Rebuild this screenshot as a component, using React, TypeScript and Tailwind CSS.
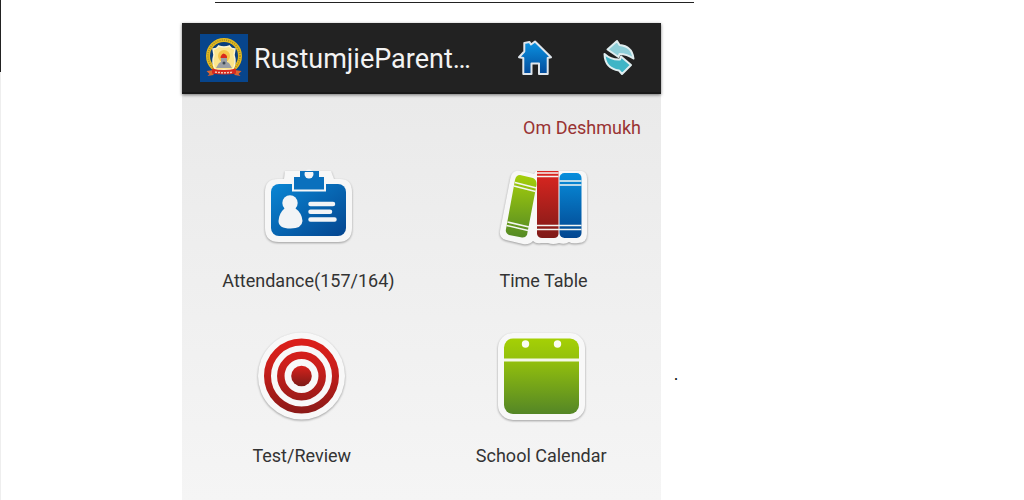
import React from 'react'

const SchoolLogo = () => (
  <svg viewBox="0 0 48 48" className="h-12 w-12 shrink-0" aria-hidden="true">
    <rect width="48" height="48" fill="#07458c" />
    {/* ring */}
    <circle cx="24" cy="22" r="16" fill="#0b3f7c" stroke="#e3b91f" strokeWidth="4" />
    <circle cx="24" cy="22" r="16" fill="none" stroke="#a08a28" strokeWidth="1.5" strokeDasharray="1 1.2" />
    {/* shield */}
    <path d="M13 15q4 0 5.500-3q5.500 2 11 0q1.500 3 5.500 3l-1 6q3 9-2 15H16q-5-6-2-15z" fill="#fbe58d" stroke="#fdf4cf" strokeWidth="1.500" />
    <circle cx="24" cy="22" r="6" fill="#f5c549" />
    <path d="M16 34l3-5l2-1v-4h6v4l2 1l3 5z" fill="#9a9ea4" />
    <path d="M20.500 24q0-3 3-4.500q4 1 3.500 4.500z" fill="#d92a1c" />
    <circle cx="24" cy="29" r="1.500" fill="#3e4a56" />
    {/* ribbon */}
    <path d="M6.500 37l7-1v5l-6 1l2-2z M41.500 37l-7-1v5l6 1l-2-2z" fill="#dc6430" />
    <path d="M12 34.500q12 3 24 0v5q-12 2-24 0z" fill="#d8281f" />
    <path d="M15 38q9 1.500 18 0" fill="none" stroke="#f3c9b5" strokeWidth="1.500" strokeDasharray="2 1" />
  </svg>
)

const HomeIcon = () => (
  <svg viewBox="0 0 40 40" className="h-10 w-10" aria-hidden="true">
    <defs>
      <linearGradient id="home" x1="0" y1="0" x2="0" y2="1">
        <stop offset="0" stopColor="#0b93e2" />
        <stop offset="1" stopColor="#034b9b" />
      </linearGradient>
    </defs>
    <path
      d="M4 19.200L9.300 13.500V5L14.500 4L16 6.500L20 3.500L36 19.200L32.700 20V36H24V25.500H16.500V36H8.300V20z"
      fill="url(#home)"
      stroke="#dfe6ec"
      strokeWidth="2"
      strokeLinejoin="round"
    />
  </svg>
)

const RefreshIcon = () => (
  <svg viewBox="0 0 40 40" className="h-10 w-10" aria-hidden="true">
    <g stroke="#e0eef0" strokeWidth="2" strokeLinejoin="round">
      <path d="M17 3L19.500 7Q32 8 33.500 20.500Q27 16 19.500 16L18.500 19L7.500 11.500z" fill="#8fcfd9" />
      <path d="M4.500 16Q11 22 20 21.500L21 18.500L31 27L22 36L19 32.500Q5 30.500 4.500 16z" fill="#3fb5c6" />
    </g>
  </svg>
)

const AttendanceIcon = () => (
  <svg viewBox="1 0 96 80" className="h-20 w-24" aria-hidden="true">
    <defs>
      <linearGradient id="badge" x1="0" y1="0" x2="1" y2="1">
        <stop offset="0" stopColor="#0a86d4" />
        <stop offset="1" stopColor="#04458f" />
      </linearGradient>
    </defs>
    <path
      d="M25 3H71L74 11H80Q92 11 92 24V60Q92 74 78 74H19Q5 74 5 60V24Q5 11 18 11H24z"
      fill="#f7f7f7"
      className="drop-shadow-[0_1px_1px_rgba(0,0,0,0.35)]"
    />
    <rect x="11" y="16" width="75" height="52" rx="8" fill="url(#badge)" />
    <path d="M34 9H40V3H59V9H65V22H34z" fill="#0a70bd" />
    <path d="M33 9V22.500H65V9" fill="none" stroke="#f7f7f7" strokeWidth="2" />
    <circle cx="49" cy="6" r="4.500" fill="#f7f7f7" />
    <path d="M40 3.500h18" stroke="#0a70bd" strokeWidth="1" />
    <circle cx="30" cy="35" r="7.700" fill="#f2f4f6" />
    <path d="M25 40H35Q42 45 42.500 53Q42 60.500 30.500 60.500Q18.500 60.500 18.500 53Q19 45 25 40z" fill="#f2f4f6" />
    <path d="M50.500 36H73 M50.500 43.700H70 M50.500 51.500H74.500" stroke="#f2f4f6" strokeWidth="4.500" strokeLinecap="round" />
  </svg>
)

const BooksIcon = () => (
  <svg viewBox="0 0 96 80" className="h-20 w-24" aria-hidden="true">
    <defs>
      <linearGradient id="green" x1="0" y1="0" x2="0" y2="1">
        <stop offset="0" stopColor="#a5cf0a" />
        <stop offset="1" stopColor="#548a25" />
      </linearGradient>
      <linearGradient id="red" x1="0" y1="0" x2="0" y2="1">
        <stop offset="0" stopColor="#dd2620" />
        <stop offset="1" stopColor="#7f1a18" />
      </linearGradient>
      <linearGradient id="blue" x1="0" y1="0" x2="0" y2="1">
        <stop offset="0" stopColor="#078edc" />
        <stop offset="1" stopColor="#034690" />
      </linearGradient>
    </defs>
    <path
      d="M20 3Q22 2 38 6L40 3H86Q91 4 91 11V66Q91 75 82 75Q76 76 73 74Q69 77 63 75Q57 77 52 75H45Q40 76 37 73Q33 77 27 76L10 72Q3 70 4 63L14 12Q15 4 20 3z"
      fill="#f7f7f7"
      className="drop-shadow-[0_1px_1px_rgba(0,0,0,0.35)]"
    />
    <path d="M24 7L37 10Q41 12 40.500 17L31 67Q29 70 26 69.500L13 67Q9 65 10 61L19 12Q20 7 24 7z" fill="url(#green)" />
    <path d="M41 3H62.500V66Q62 70 58 70H46Q42 70 41 66z" fill="url(#red)" />
    <rect x="63.500" y="5" width="22" height="65" rx="5" fill="url(#blue)" />
    <path
      d="M19 14.500L40.500 20 M18 18L39.500 23.500 M11.500 54L33 59 M10.500 57.500L32 62.500 M41 5H62.500 M41 8.500H62.500 M41 57.500H85.500 M41 61.500H85.500 M63.500 13H85.500 M63.500 17H85.500"
      stroke="#f4f6f2"
      strokeWidth="1.500"
    />
  </svg>
)

const TargetIcon = () => (
  <svg viewBox="0 0 96 93" className="h-[93px] w-24" aria-hidden="true">
    <defs>
      <linearGradient id="target" gradientUnits="userSpaceOnUse" x1="0" y1="9" x2="0" y2="84">
        <stop offset="0" stopColor="#dc1f1a" />
        <stop offset="0.35" stopColor="#cc1f1b" />
        <stop offset="1" stopColor="#8a1a18" />
      </linearGradient>
      <linearGradient id="core" x1="0" y1="0" x2="0" y2="1">
        <stop offset="0" stopColor="#d8221c" />
        <stop offset="1" stopColor="#7d1a17" />
      </linearGradient>
    </defs>
    <circle cx="47.500" cy="46" r="43.500" fill="#f8f8f8" className="drop-shadow-[0_1px_1px_rgba(0,0,0,0.35)]" />
    <circle cx="47.500" cy="46" r="34" fill="none" stroke="url(#target)" strokeWidth="7" />
    <circle cx="47.500" cy="46" r="20.700" fill="none" stroke="url(#target)" strokeWidth="7.500" />
    <circle cx="47.500" cy="46" r="10.300" fill="url(#core)" />
  </svg>
)

const CalendarIcon = () => (
  <svg viewBox="0 0 96 93" className="h-[93px] w-24" aria-hidden="true">
    <defs>
      <linearGradient id="calendar" x1="0" y1="0" x2="0" y2="1">
        <stop offset="0" stopColor="#a5d005" />
        <stop offset="0.3" stopColor="#92bf0d" />
        <stop offset="1" stopColor="#548626" />
      </linearGradient>
    </defs>
    <rect x="5" y="3" width="87" height="87" rx="15" fill="#f8f8f8" className="drop-shadow-[0_1px_1px_rgba(0,0,0,0.35)]" />
    <rect x="11" y="8.500" width="75" height="75.500" rx="9" fill="url(#calendar)" />
    <path d="M11 30H86" stroke="#f4f8e8" strokeWidth="3" />
    <circle cx="32.500" cy="14" r="3.700" fill="#fbfdf4" />
    <circle cx="64.500" cy="14" r="3.700" fill="#fbfdf4" />
  </svg>
)

const Tile = ({ icon, label }: { icon: React.ReactNode; label: string }) => (
  <button type="button" className="flex cursor-pointer flex-col items-center gap-[21px] text-lg leading-6 text-[#333333]">
    {icon}
    <span>{label}</span>
  </button>
)

const App = () => {
  return (
    <div className="flex h-screen overflow-hidden bg-white font-[Roboto,sans-serif]">
      {/* Page edge */}
      <div className="flex w-px shrink-0 flex-col">
        <div className="h-[72px] bg-[#222222]" />
        <div className="flex-1 bg-[#eeeeee]" />
      </div>

      <div className="flex min-w-0 flex-1 flex-col pl-[181px]">
        <hr className="mt-0.5 ml-[33px] w-full max-w-[479px] border-t border-[#222222]" />

        <div className="mt-5 flex flex-1 items-start">
          <div className="flex h-full w-full max-w-[479px] flex-col bg-linear-to-b from-[#e8e8e8] to-[#f5f5f5]">
            {/* Action bar */}
            <header className="flex h-[71px] items-center border-b-2 border-[#191919] bg-[#222222] pr-[21px] pl-[18px] shadow-[0_1px_3px_rgba(0,0,0,0.5)]">
              <SchoolLogo />
              <h1 className="ml-1.5 flex-1 truncate pt-0.5 text-[27px] leading-9 text-[#f3f3f3]">RustumjieParent…</h1>
              <div className="flex gap-[45px]">
                <button type="button" aria-label="Home" className="cursor-pointer">
                  <HomeIcon />
                </button>
                <button type="button" aria-label="Refresh" className="cursor-pointer">
                  <RefreshIcon />
                </button>
              </div>
            </header>

            {/* Menu */}
            <main>
              <p className="mt-[22px] pr-5 text-right text-lg leading-6 text-[#993333]">Om Deshmukh</p>
              <div className="mt-7 grid grid-cols-2 pl-[9px]">
                <Tile icon={<AttendanceIcon />} label="Attendance(157/164)" />
                <Tile icon={<BooksIcon />} label="Time Table" />
              </div>
              <div className="mt-[37px] grid grid-cols-2">
                <Tile icon={<TargetIcon />} label="Test/Review" />
                <Tile icon={<CalendarIcon />} label="School Calendar" />
              </div>
            </main>
          </div>
          <span className="mt-[340px] ml-[13px] font-['Liberation_Serif',serif] text-base text-black">.</span>
        </div>
      </div>
    </div>
  )
}

export default App
